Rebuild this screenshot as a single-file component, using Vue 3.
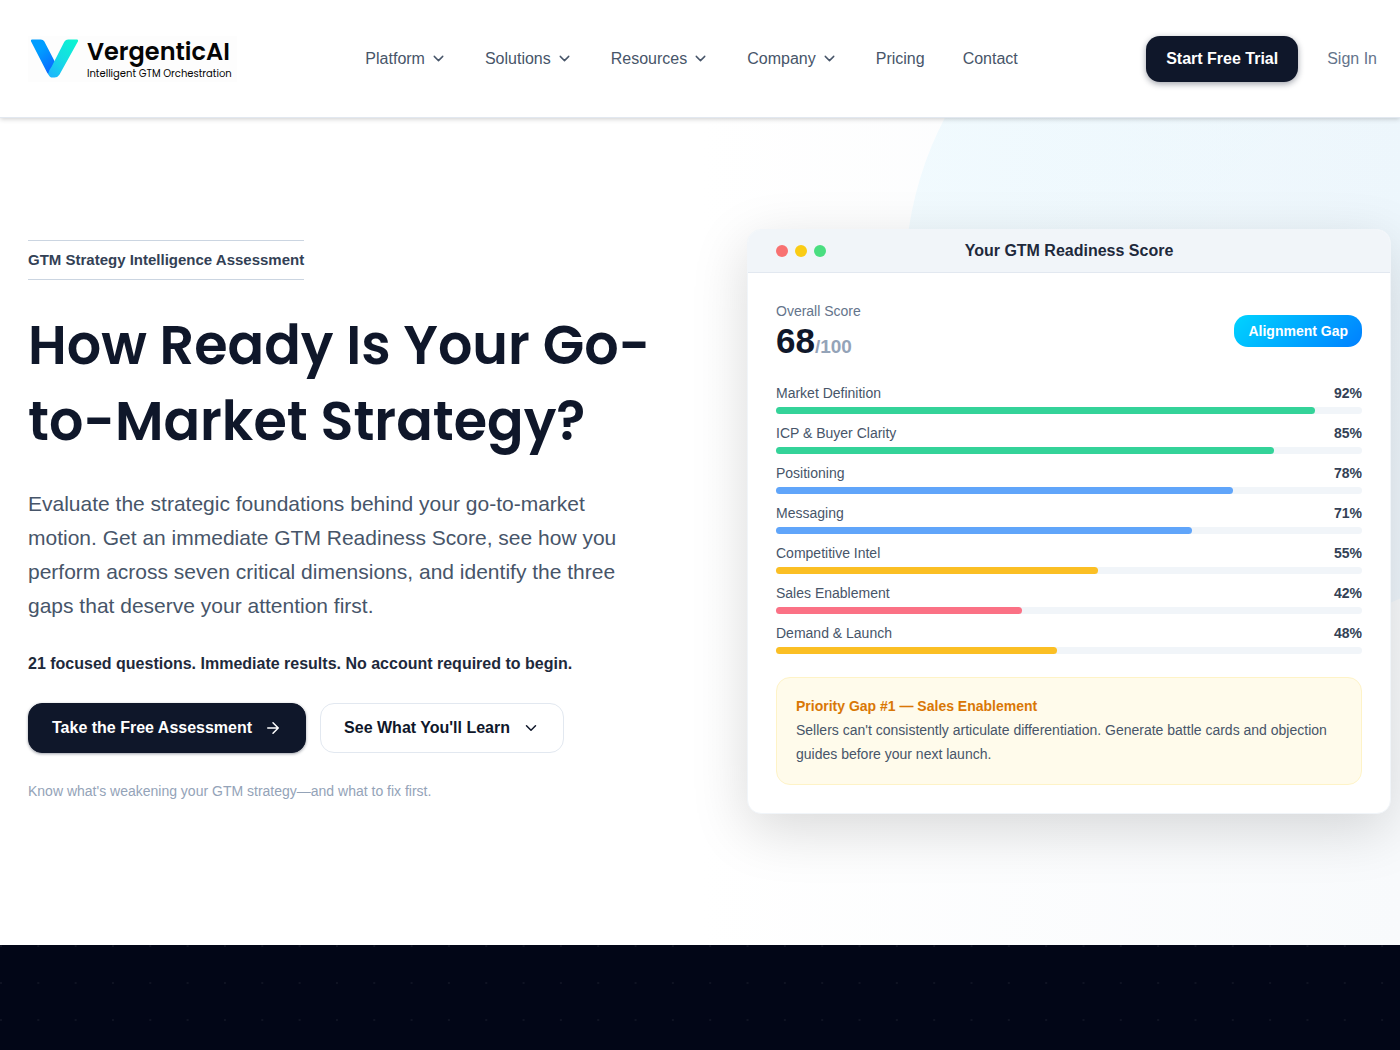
<script setup>
const navItems = [
  { label: 'Platform', menu: true },
  { label: 'Solutions', menu: true },
  { label: 'Resources', menu: true },
  { label: 'Company', menu: true },
  { label: 'Pricing', menu: false },
  { label: 'Contact', menu: false },
]

const dimensions = [
  { name: 'Market Definition', value: 92, tone: 'green' },
  { name: 'ICP & Buyer Clarity', value: 85, tone: 'green' },
  { name: 'Positioning', value: 78, tone: 'blue' },
  { name: 'Messaging', value: 71, tone: 'blue' },
  { name: 'Competitive Intel', value: 55, tone: 'amber' },
  { name: 'Sales Enablement', value: 42, tone: 'rose' },
  { name: 'Demand & Launch', value: 48, tone: 'amber' },
]
</script>

<template>
  <div class="page">
    <header class="site-header">
      <a class="logo" href="#">
        <svg class="logo-mark" viewBox="0 0 50 40" aria-hidden="true">
          <defs>
            <linearGradient id="markLeft" x1="0" y1="0" x2="0.6" y2="1">
              <stop offset="0.4" stop-color="#009dff" />
              <stop offset="1" stop-color="#0a6cff" />
            </linearGradient>
            <linearGradient id="markRight" x1="0.9" y1="0" x2="0.2" y2="1">
              <stop offset="0" stop-color="#0cf5d0" />
              <stop offset="0.55" stop-color="#16dce4" />
              <stop offset="1" stop-color="#1cb8fb" />
            </linearGradient>
          </defs>
          <path d="M2 0H11Q13.500 0 14.500 2L25.500 23L20 36Q18.500 36 17.500 34L1 2Q0.500 0 2 0Z" fill="url(#markLeft)" />
          <path d="M39 0H48Q49.500 0 49 2L30 36Q28 39 25 39H23Q20 39 18.500 35Q19.500 31 22 28L35 2.500Q36.500 0 39 0Z" fill="url(#markRight)" />
        </svg>
        <span class="logo-words">
          <span class="logo-name">VergenticAI</span>
          <span class="logo-tag">Intelligent GTM Orchestration</span>
        </span>
      </a>

      <nav class="nav" aria-label="Main">
        <template v-for="item in navItems" :key="item.label">
          <button v-if="item.menu" class="nav-item" type="button">
            {{ item.label }}
            <svg class="icon" viewBox="0 0 24 24" aria-hidden="true"><path d="m6 9 6 6 6-6" /></svg>
          </button>
          <a v-else class="nav-item" href="#">{{ item.label }}</a>
        </template>
      </nav>

      <div class="actions">
        <a class="trial" href="#">Start Free Trial</a>
        <a class="sign-in" href="#">Sign In</a>
      </div>
    </header>

    <main>
      <section class="hero">
        <div class="halo"></div>

        <div class="pitch">
          <p class="eyebrow">GTM Strategy Intelligence Assessment</p>
          <h1>How Ready Is Your Go-to-Market Strategy?</h1>
          <p class="lead">
            Evaluate the strategic foundations behind your go-to-market motion. Get an immediate GTM
            Readiness Score, see how you perform across seven critical dimensions, and identify the
            three gaps that deserve your attention first.
          </p>
          <p class="facts">21 focused questions. Immediate results. No account required to begin.</p>
          <div class="cta-row">
            <a class="cta cta-dark" href="#">
              Take the Free Assessment
              <svg class="icon" viewBox="0 0 24 24" aria-hidden="true"><path d="M5 12h14M12 5l7 7-7 7" /></svg>
            </a>
            <a class="cta cta-light" href="#">
              See What You'll Learn
              <svg class="icon" viewBox="0 0 24 24" aria-hidden="true"><path d="m6 9 6 6 6-6" /></svg>
            </a>
          </div>
          <p class="note">Know what's weakening your GTM strategy—and what to fix first.</p>
        </div>

        <article class="card">
          <div class="card-bar">
            <div class="lights"><span class="red"></span><span class="yellow"></span><span class="lime"></span></div>
            <h2>Your GTM Readiness Score</h2>
          </div>
          <div class="card-body">
            <div class="summary">
              <div>
                <p class="summary-label">Overall Score</p>
                <p class="score">68<span>/100</span></p>
              </div>
              <span class="badge">Alignment Gap</span>
            </div>
            <ul class="bars">
              <li v-for="d in dimensions" :key="d.name">
                <div class="bar-head"><span>{{ d.name }}</span><strong>{{ d.value }}%</strong></div>
                <div class="track"><div class="fill" :class="d.tone" :style="{ width: d.value + '%' }"></div></div>
              </li>
            </ul>
            <div class="priority">
              <h3>Priority Gap #1 — Sales Enablement</h3>
              <p>
                Sellers can't consistently articulate differentiation. Generate battle cards and
                objection guides before your next launch.
              </p>
            </div>
          </div>
        </article>
      </section>
    </main>

    <section class="night"></section>
  </div>
</template>

<style>
body {
  margin: 0;
  background: #ffffff;
}
</style>

<style scoped>
.page {
  display: flex;
  flex-direction: column;
  min-height: 100vh;
  font-family: "Liberation Sans", Arial, sans-serif;
  color: #0f172a;
}

.page * {
  box-sizing: border-box;
}

p,
h1,
h2,
h3,
ul {
  margin: 0;
  padding: 0;
}

a {
  color: inherit;
  text-decoration: none;
}

.icon {
  flex: none;
  width: 17px;
  height: 17px;
  fill: none;
  stroke: currentColor;
  stroke-width: 2;
  stroke-linecap: round;
  stroke-linejoin: round;
}

/* Header */
.site-header {
  position: relative;
  z-index: 2;
  display: flex;
  align-items: center;
  justify-content: space-between;
  height: 118px;
  padding: 0 23px 0 28px;
  background: #ffffff;
  border-bottom: 1px solid #e2e8f0;
  box-shadow: 0 1px 5px rgba(0, 0, 0, 0.2);
}

.logo {
  display: flex;
  align-items: center;
  gap: 8px;
  width: 209px;
  height: 46px;
  padding-left: 2px;
  background: #fdfdfd;
}

.logo-mark {
  flex: none;
  width: 49px;
  height: 40px;
}

.logo-words {
  display: flex;
  flex-direction: column;
  color: #050505;
  font-family: Poppins, Inter, sans-serif;
  white-space: nowrap;
}

.logo-name {
  font-size: 24px;
  font-weight: 600;
  line-height: 30px;
}

.logo-tag {
  font-size: 10px;
  font-weight: 400;
  line-height: 14px;
}

.nav {
  display: flex;
  align-items: center;
  gap: 38px;
}

.nav-item {
  display: flex;
  align-items: center;
  gap: 5px;
  padding: 0;
  border: 0;
  background: none;
  color: #475569;
  font-family: inherit;
  font-size: 16px;
  line-height: 24px;
  cursor: pointer;
}

.actions {
  display: flex;
  align-items: center;
  gap: 29px;
  font-size: 16px;
}

.trial {
  padding: 11px 20px;
  border-radius: 14px;
  background: #0f172a;
  color: #ffffff;
  font-weight: 700;
  line-height: 24px;
  box-shadow: 0 2px 6px rgba(15, 23, 42, 0.4);
}

.sign-in {
  color: #64748b;
}

/* Hero */
.hero {
  position: relative;
  display: grid;
  grid-template-columns: minmax(0, 1fr) minmax(0, 1fr);
  align-items: center;
  gap: 75px;
  padding: 111px 9px 131px 28px;
  overflow: hidden;
  background: linear-gradient(90deg, #ffffff 50%, #f8fafc);
}

.halo {
  position: absolute;
  top: -188px;
  right: -205px;
  width: 700px;
  height: 700px;
  border-radius: 50%;
  background: linear-gradient(135deg, rgba(0, 190, 255, 0.05), rgba(0, 140, 255, 0.04));
}

.pitch,
.card {
  position: relative;
}

.pitch {
  padding-bottom: 3px;
}

.eyebrow {
  width: fit-content;
  padding: 9px 0;
  border-top: 1px solid #cbd5e1;
  border-bottom: 1px solid #cbd5e1;
  color: #334155;
  font-size: 15px;
  font-weight: 700;
  line-height: 20px;
}

h1 {
  margin-top: 27px;
  font-family: Poppins, Inter, sans-serif;
  font-size: 54px;
  font-weight: 600;
  line-height: 76px;
}

.lead {
  max-width: 620px;
  margin-top: 28px;
  color: #475569;
  font-size: 21px;
  line-height: 34px;
}

.facts {
  margin-top: 29px;
  color: #1e293b;
  font-size: 16px;
  font-weight: 700;
  line-height: 24px;
}

.cta-row {
  display: flex;
  gap: 14px;
  margin-top: 27px;
}

.cta {
  display: flex;
  align-items: center;
  gap: 12px;
  padding: 12px 23px;
  border: 1px solid #0f172a;
  border-radius: 14px;
  font-size: 16px;
  font-weight: 700;
  line-height: 24px;
}

.cta .icon {
  width: 18px;
  height: 18px;
}

.cta-dark {
  background: #0f172a;
  color: #ffffff;
  box-shadow: 0 1px 3px rgba(15, 23, 42, 0.4);
}

.cta-light {
  border-color: #e2e8f0;
  background: #ffffff;
}

.note {
  margin-top: 28px;
  color: #94a3b8;
  font-size: 14px;
  line-height: 20px;
}

/* Score card */
.card {
  overflow: hidden;
  border: 1px solid #f1f5f9;
  border-radius: 14px;
  background: #ffffff;
  box-shadow: 0 16px 56px rgba(0, 0, 0, 0.15);
}

.card-bar {
  position: relative;
  display: flex;
  align-items: center;
  justify-content: center;
  height: 43px;
  border-bottom: 1px solid #e2e8f0;
  background: #f1f5f9;
}

.card-bar h2 {
  color: #1e293b;
  font-size: 16px;
  line-height: 24px;
}

.lights {
  position: absolute;
  left: 28px;
  display: flex;
  gap: 7px;
}

.lights span {
  width: 12px;
  height: 12px;
  border-radius: 50%;
}

.red { background: #f87171; }
.yellow { background: #facc15; }
.lime { background: #4ade80; }

.card-body {
  padding: 28px;
}

.summary {
  display: flex;
  align-items: center;
  justify-content: space-between;
}

.summary-label {
  color: #64748b;
  font-size: 14px;
  line-height: 20px;
}

.score {
  font-size: 35px;
  font-weight: 700;
  line-height: 40px;
}

.score span {
  color: #94a3b8;
  font-size: 19px;
  line-height: 20px;
}

.badge {
  padding: 6px 14px;
  border-radius: 14px;
  background: linear-gradient(135deg, #00d4ff, #0080ff);
  color: #ffffff;
  font-size: 14px;
  font-weight: 700;
  line-height: 20px;
}

.bars {
  display: flex;
  flex-direction: column;
  gap: 9px;
  margin-top: 22px;
  list-style: none;
}

.bar-head {
  display: flex;
  justify-content: space-between;
  margin-bottom: 4px;
  color: #475569;
  font-size: 14px;
  line-height: 20px;
}

.bar-head strong {
  color: #334155;
}

.track {
  height: 7px;
  border-radius: 4px;
  background: #f1f5f9;
}

.fill {
  height: 7px;
  border-radius: 4px;
}

.green { background: #34d399; }
.blue { background: #60a5fa; }
.amber { background: #fbbf24; }
.rose { background: #fb7185; }

.priority {
  margin-top: 23px;
  padding: 16px 19px 18px;
  border: 1px solid #fef3c7;
  border-radius: 14px;
  background: #fffbeb;
  font-size: 14px;
  line-height: 24px;
}

.priority h3 {
  color: #d97706;
  font-size: 14px;
}

.priority p {
  color: #475569;
}

/* Dark band with a faint dot grid */
.night {
  flex: 1;
  min-height: 105px;
  background-color: #020617;
  background-image: radial-gradient(circle at 1px 1px, rgba(255, 255, 255, 0.05) 1px, transparent 1px);
  background-size: calc(100% * 2 / 75) 37px;
}
</style>
